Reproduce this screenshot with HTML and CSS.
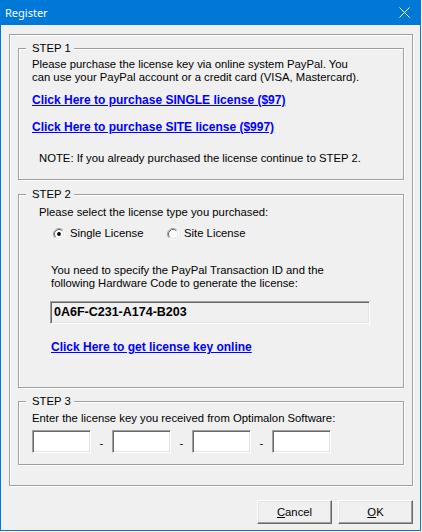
FILE: index.html
```html
<!DOCTYPE html>
<html>
<head>
<meta charset="utf-8">
<link rel="stylesheet" href="styles.css">
</head>
<body>
<div class="window">
  <div class="titlebar">
    <span class="title">Register</span>
    <svg class="close" width="11" height="11" viewBox="0 0 11 11"><path d="M0.5 0.5 L10.5 10.5 M10.5 0.5 L0.5 10.5" stroke="#fff" stroke-width="1" fill="none"/></svg>
  </div>
  <div class="frame">
    <fieldset class="group">
      <legend>STEP 1</legend>
      <div class="gbody g1">
        <p class="text">Please purchase the license key via online system PayPal. You<br>can use your PayPal account or a credit card (VISA, Mastercard).</p>
        <a class="link l1" href="#">Click Here to purchase SINGLE license ($97)</a>
        <a class="link l2" href="#">Click Here to purchase SITE license ($997)</a>
        <p class="text note">NOTE: If you already purchased the license continue to STEP 2.</p>
      </div>
    </fieldset>
    <fieldset class="group s2">
      <legend>STEP 2</legend>
      <div class="gbody g2">
        <p class="text sel">Please select the license type you purchased:</p>
        <div class="radios">
          <label class="opt first">
            <svg class="radio" width="12" height="12" viewBox="0 0 12 12"><circle cx="6" cy="6" r="4.6" fill="#fff"/><path d="M2.11 9.89 A5.5 5.5 0 0 1 9.89 2.11" stroke="#a0a0a0" fill="none"/><path d="M9.89 2.11 A5.5 5.5 0 0 1 2.11 9.89" stroke="#ffffff" fill="none"/><path d="M2.82 9.18 A4.5 4.5 0 0 1 9.18 2.82" stroke="#696969" fill="none"/><path d="M9.18 2.82 A4.5 4.5 0 0 1 2.82 9.18" stroke="#e3e3e3" fill="none"/><circle cx="6" cy="6" r="1.9" fill="#000"/></svg>
            <span>Single License</span>
          </label>
          <label class="opt">
            <svg class="radio" width="12" height="12" viewBox="0 0 12 12"><circle cx="6" cy="6" r="4.6" fill="#fff"/><path d="M2.11 9.89 A5.5 5.5 0 0 1 9.89 2.11" stroke="#a0a0a0" fill="none"/><path d="M9.89 2.11 A5.5 5.5 0 0 1 2.11 9.89" stroke="#ffffff" fill="none"/><path d="M2.82 9.18 A4.5 4.5 0 0 1 9.18 2.82" stroke="#696969" fill="none"/><path d="M9.18 2.82 A4.5 4.5 0 0 1 2.82 9.18" stroke="#e3e3e3" fill="none"/></svg>
            <span>Site License</span>
          </label>
        </div>
        <p class="text need">You need to specify the PayPal Transaction ID and the<br>following Hardware Code to generate the license:</p>
        <div class="hwbox">0A6F-C231-A174-B203</div>
        <a class="link l3" href="#">Click Here to get license key online</a>
      </div>
    </fieldset>
    <fieldset class="group s3">
      <legend>STEP 3</legend>
      <div class="gbody g3">
        <p class="text">Enter the license key you received from Optimalon Software:</p>
        <div class="keyrow">
          <div class="key"></div><span class="dash">-</span>
          <div class="key"></div><span class="dash">-</span>
          <div class="key"></div><span class="dash">-</span>
          <div class="key"></div>
        </div>
      </div>
    </fieldset>
  </div>
  <div class="buttons">
    <button class="btn"><u>C</u>ancel</button>
    <button class="btn"><u>O</u>K</button>
  </div>
</div>
</body>
</html>
```
FILE: styles.css
```css
* { box-sizing: border-box; }
html, body { margin: 0; padding: 0; background: #ffffff; }
body {
  font-family: "Liberation Sans", Arial, sans-serif;
  font-size: 11.3px;
  line-height: 13px;
  color: #000;
}
.window {
  width: 421px;
  height: 531px;
  background: #f0f0f0;
  border: 1px solid #0078d7;
  border-top: 0;
  display: flex;
  flex-direction: column;
}
.titlebar {
  height: 25px;
  flex: none;
  background: #0078d7;
  color: #fff;
  display: flex;
  align-items: center;
  justify-content: space-between;
  padding: 0 10px 0 4px;
  font-family: "Noto Sans", sans-serif;
  font-size: 11px;
  line-height: 25px;
}
.close { display: block; }
.frame {
  margin: 9px 7px 0 8px;
  border: 1px solid #a0a0a0;
  box-shadow: inset 1px 1px 0 #fff, 1px 1px 0 #fff;
  padding: 7px 8px 20px;
}
.group {
  margin: 0;
  padding: 0;
  min-width: 0;
  border: 1px solid #a0a0a0;
  box-shadow: inset 1px 1px 0 #fff, 1px 1px 0 #fff;
}
.group.s2 { margin-top: 8px; }
.group.s3 { margin-top: 7px; }
legend {
  margin-left: 7px;
  padding: 0 3px 0 6px;
  background: #f0f0f0;
  line-height: 13px;
}
.gbody { padding-left: 13px; }
.g1 { padding-top: 3px; padding-bottom: 14px; }
.g2 { padding-top: 5px; padding-bottom: 33px; }
.g3 { padding-top: 4px; padding-bottom: 11px; }
.text { margin: 0; }
.link {
  display: block;
  width: max-content;
  color: #0000ff;
  font-weight: bold;
  font-size: 12px;
  line-height: 14px;
  text-decoration: underline;
}
.l1 { margin-top: 9px; }
.l2 { margin-top: 13px; }
.note { margin-top: 18px; padding-left: 7px; }
.sel { margin-left: 7px; }
.radios {
  display: flex;
  margin-top: 8px;
  padding-left: 21px;
  height: 13px;
}
.opt {
  display: flex;
  align-items: center;
  gap: 5px;
}
.opt.first { width: 114px; }
.radio { display: block; flex: none; }
.need { margin-top: 24px; margin-left: 19px; }
.hwbox {
  margin-top: 11px;
  margin-left: 18px;
  width: 320px;
  height: 23px;
  border: 1px solid;
  border-color: #a0a0a0 #ffffff #ffffff #a0a0a0;
  box-shadow: inset 1px 1px 0 #696969, inset -1px -1px 0 #e3e3e3;
  padding: 0 3px;
  display: flex;
  align-items: center;
  font-weight: bold;
  font-size: 12.5px;
  line-height: 15px;
}
.l3 { margin-top: 16px; margin-left: 19px; }
.keyrow {
  display: flex;
  align-items: center;
  margin-top: 5px;
  height: 23px;
}
.key {
  width: 59px;
  height: 23px;
  background: #fff;
  border: 1px solid;
  border-color: #a0a0a0 #ffffff #ffffff #a0a0a0;
  box-shadow: inset 1px 1px 0 #696969, inset -1px -1px 0 #e3e3e3;
}
.dash {
  width: 21px;
  text-align: center;
  padding-top: 3px;
}
.buttons {
  display: flex;
  justify-content: flex-end;
  gap: 6px;
  margin-top: 14px;
  padding-right: 7px;
}
.btn {
  width: 75px;
  height: 24px;
  padding: 0;
  margin: 0;
  font: inherit;
  color: #000;
  background: #f0f0f0;
  border: 1px solid;
  border-color: #ffffff #696969 #696969 #ffffff;
  box-shadow: inset -1px -1px 0 #a0a0a0, inset 1px 1px 0 #e3e3e3;
}
.btn u { text-decoration: underline; }
```
